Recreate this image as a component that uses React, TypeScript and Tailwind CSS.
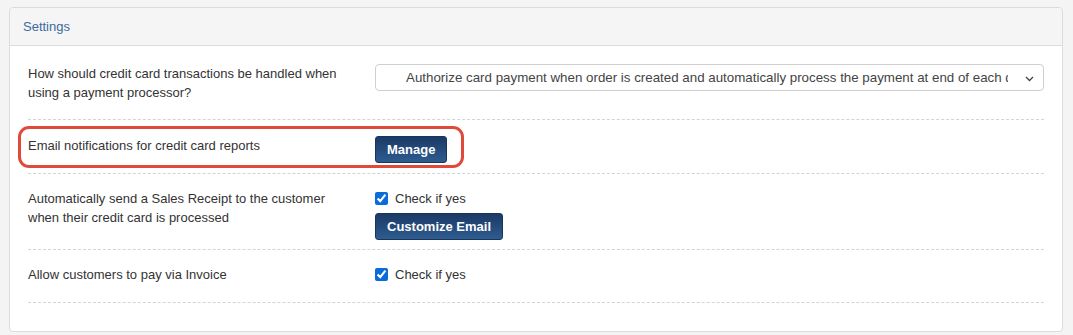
import React from "react";

function Btn({ children }: { children: React.ReactNode }) {
  return (
    <button className="h-[27px] px-[11px] rounded-[3px] border border-[#1a355c] bg-gradient-to-b from-[#1c3a66] to-[#2e5c90] text-white font-bold text-[13px] leading-none">
      {children}
    </button>
  );
}

function Check() {
  return (
    <label className="flex items-center h-[19px] text-[13px] text-[#333]">
      <input type="checkbox" defaultChecked className="w-[13px] h-[13px] m-0 mr-[7px] accent-[#0b6bd9]" />
      Check if yes
    </label>
  );
}

export default function App() {
  return (
    <div
      className="w-[1073px] h-[335px] bg-[#f4f4f4] pt-[7px] pl-[9px] pr-[10px] relative overflow-hidden"
      style={{ fontFamily: '"Liberation Sans", Arial, sans-serif' }}
    >
      <div className="border border-[#dcdcdc] rounded-[4px] bg-white">
        <div className="h-[38px] bg-[#f5f5f5] border-b border-[#dcdcdc] rounded-t-[4px] flex items-center pl-[13px] text-[13px] text-[#3a6b9c]">
          Settings
        </div>
        <div className="px-[18px] pb-[28px] text-[13px] leading-[19px] text-[#333]">
          <div className="flex pt-[18px] pb-[17px] border-b border-dashed border-[#d4d4d4]">
            <div className="w-[347px] shrink-0">
              How should credit card transactions be handled when
              <br />
              using a payment processor?
            </div>
            <div className="flex-1">
              <div className="h-[27px] border border-[#cfcfcf] rounded-[4px] flex items-center relative bg-white">
                <div className="absolute left-[30px] right-[35px] overflow-hidden whitespace-nowrap text-[#444] text-[13.33px]">
                  Authorize card payment when order is created and automatically process the payment at end of each day
                </div>
                <svg className="absolute right-[9px] top-[11px]" width="9" height="6" viewBox="0 0 9 6">
                  <path d="M1 1 L4.5 4.5 L8 1" fill="none" stroke="#444" strokeWidth="1.3" />
                </svg>
              </div>
            </div>
          </div>
          <div className="flex pt-[16px] pb-[10px] border-b border-dashed border-[#d4d4d4]">
            <div className="w-[347px] shrink-0">Email notifications for credit card reports</div>
            <div className="flex-1">
              <Btn>Manage</Btn>
            </div>
          </div>
          <div className="flex pt-[15px] pb-[9px] border-b border-dashed border-[#d4d4d4]">
            <div className="w-[347px] shrink-0">
              Automatically send a Sales Receipt to the customer
              <br />
              when their credit card is processed
            </div>
            <div className="flex-1 flex flex-col items-start gap-[5px]">
              <Check />
              <Btn>Customize Email</Btn>
            </div>
          </div>
          <div className="flex pt-[15px] pb-[18px] border-b border-dashed border-[#d4d4d4]">
            <div className="w-[347px] shrink-0">Allow customers to pay via Invoice</div>
            <div className="flex-1">
              <Check />
            </div>
          </div>
        </div>
      </div>
      <div className="absolute left-[18px] top-[126px] w-[446px] h-[42px] border-[3px] border-[#e04a3b] rounded-[11px] pointer-events-none" />
    </div>
  );
}
